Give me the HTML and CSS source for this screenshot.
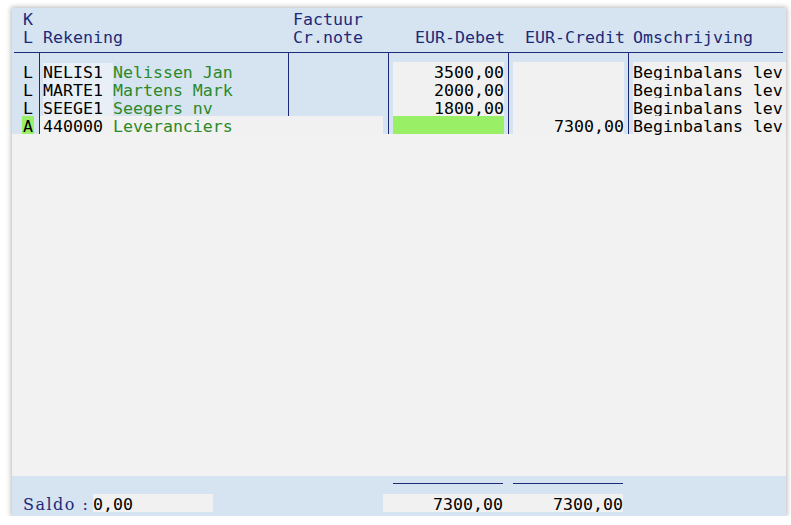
FILE: index.html
```html
<!DOCTYPE html>
<html>
<head>
<meta charset="utf-8">
<link rel="stylesheet" href="styles.css">
</head>
<body>
<div class="panel">
  <div class="head">
    <div class="hc c-k">K<br>L</div>
    <div class="hc c-rek"><br>Rekening</div>
    <div class="hc c-fac">Factuur<br>Cr.note</div>
    <div class="hc c-num"><br>EUR-Debet</div>
    <div class="hc c-num"><br>EUR-Credit</div>
    <div class="hc c-oms"><br>Omschrijving</div>
  </div>
  <div class="rows">
    <div class="cell k"></div><div class="cell rek line"></div><div class="cell fac line"></div><div class="cell num line"></div><div class="cell num line"></div><div class="cell oms line"></div>

    <div class="cell k">L</div>
    <div class="cell rek line"><span class="code">NELIS1 </span><span class="name">Nelissen Jan</span></div>
    <div class="cell fac line"></div>
    <div class="cell num line"><div class="fld r">3500,00</div></div>
    <div class="cell num line"><div class="fld r"></div></div>
    <div class="cell oms line"><div class="fld">Beginbalans lev</div></div>

    <div class="cell k">L</div>
    <div class="cell rek line"><span class="code">MARTE1 </span><span class="name">Martens Mark</span></div>
    <div class="cell fac line"></div>
    <div class="cell num line"><div class="fld r">2000,00</div></div>
    <div class="cell num line"><div class="fld r"></div></div>
    <div class="cell oms line"><div class="fld">Beginbalans lev</div></div>

    <div class="cell k">L</div>
    <div class="cell rek line"><span class="code">SEEGE1 </span><span class="name">Seegers nv</span></div>
    <div class="cell fac line"></div>
    <div class="cell num line"><div class="fld r">1800,00</div></div>
    <div class="cell num line"><div class="fld r"></div></div>
    <div class="cell oms line"><div class="fld">Beginbalans lev</div></div>

    <div class="cell k"><span class="cur">A</span></div>
    <div class="cell rek line cur-row"><span class="code2">440000 </span><span class="name">Leveranciers</span></div>
    <div class="cell fac cur-fac"><div class="fld2"></div></div>
    <div class="cell num line"><div class="fld green"></div></div>
    <div class="cell num line"><div class="fld r">7300,00</div></div>
    <div class="cell oms line"><div class="fld">Beginbalans lev</div></div>
  </div>
  <div class="body"></div>
  <div class="foot">
    <div class="ulines">
      <div class="ul"></div>
      <div class="ul"></div>
    </div>
    <div class="totals">
      <span class="saldo">Saldo :</span>
      <div class="sfld">0,00</div>
      <div class="tfld">7300,00</div>
      <div class="tfld">7300,00</div>
    </div>
  </div>
</div>
</body>
</html>
```

FILE: styles.css
```css
html, body {
  margin: 0;
  padding: 0;
  background: #ffffff;
}
body {
  font-family: "DejaVu Sans Mono", "Liberation Mono", monospace;
  font-size: 16.6px;
  line-height: 18px;
}
.panel {
  margin: 8px 0 0 12px;
  width: 774px;
  box-shadow: 0 0 5px 1px rgba(0, 0, 0, 0.28);
  background: #d6e3f1;
}
.head {
  display: grid;
  grid-template-columns: 27px 249px 100px 120px 120px 158px;
  height: 45px;
  margin: 0 3px 0 2px;
  border-bottom: 1px solid #1d2a78;
  color: #1d2a78;
  padding-top: 3px;
  box-sizing: border-box;
}
.hc { white-space: pre; }
.head .c-k { padding-left: 9px; }
.head .c-rek { padding-left: 2px; }
.head .c-fac { padding-left: 3px; }
.head .c-num { text-align: right; padding-right: 5px; }
.head .c-oms { padding-left: 3px; }

.rows {
  display: grid;
  grid-template-columns: 27px 249px 100px 120px 120px 158px;
  grid-template-rows: 9px 18px 18px 18px 18px;
  height: 81px;
}
.cell { white-space: pre; height: 18px; line-height: 22px; }
.rows > .cell:nth-child(-n+6) { height: 9px; }
.line { border-left: 1px solid #1d2a78; }
.k { padding-left: 11px; color: #000; }
.rek { padding-left: 3px; }
.code { background: #e9eff7; color: #000; }
.code2 { color: #000; }
.name { color: #2a8a2a; }
.num { padding: 0 4px; }
.oms { padding-left: 4px; }
.fld {
  background: #f1f1f1;
  height: 18px;
  color: #000;
}
.fld.r { text-align: right; }
.fld.green { background: #99ef66; }
.cur {
  display: inline-block;
  height: 18px;
  background: #99ef66;
  padding: 0 1px;
  margin-left: -1px;
}
.cur-row {
  background: #f1f1f1;
}
.cur-fac {
  padding-right: 5px;
}
.fld2 {
  background: #f1f1f1;
  height: 18px;
}

.body {
  height: 342px;
  background: #f2f2f2;
}
.foot {
  height: 40px;
  box-sizing: border-box;
  padding-top: 7px;
}
.ulines {
  display: flex;
  gap: 10px;
  padding-left: 381px;
  height: 11px;
}
.ul {
  width: 110px;
  height: 0;
  border-top: 1px solid #1d2a78;
}
.totals {
  display: flex;
  align-items: flex-start;
  height: 18px;
  padding-left: 11px;
  line-height: 21px;
}
.saldo {
  font-family: "DejaVu Serif", "Liberation Serif", serif;
  font-size: 16px;
  color: #1d2a78;
  width: 70px;
  letter-spacing: 1.5px;
  white-space: pre;
}
.sfld {
  width: 120px;
  height: 18px;
  background: #f1f1f1;
  color: #000;
}
.tfld {
  width: 120px;
  height: 18px;
  background: #f1f1f1;
  color: #000;
  text-align: right;
}
.sfld + .tfld { margin-left: 170px; }
```
